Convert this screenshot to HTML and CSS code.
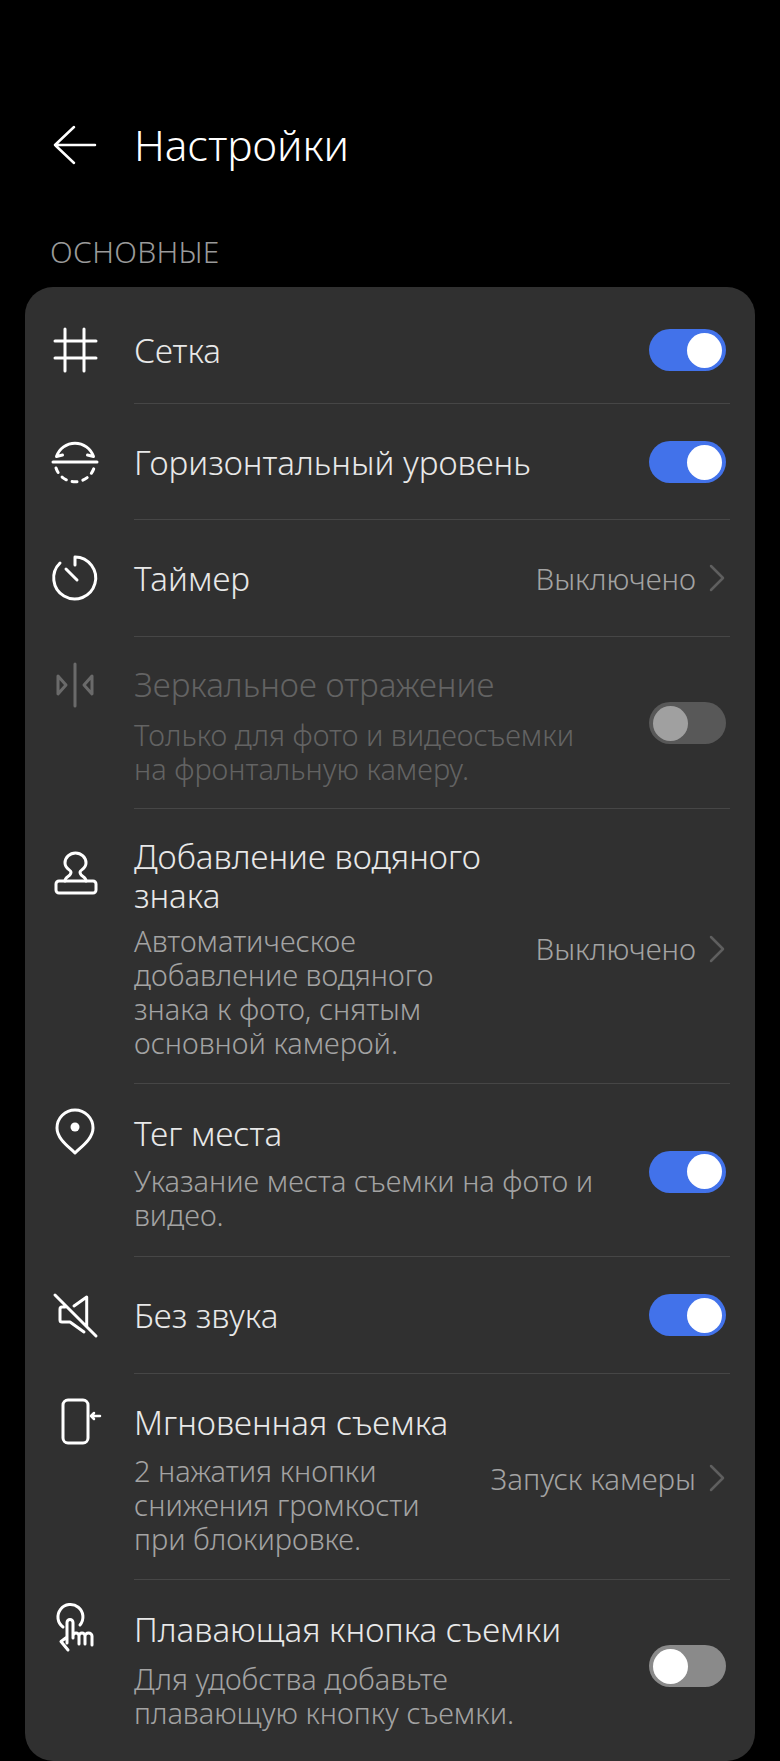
FILE: index.html
```html
<!DOCTYPE html>
<html lang="ru">
<head>
    <meta charset="UTF-8">
    <meta name="viewport" content="width=device-width, initial-scale=1.0">
    <title>Настройки</title>
    <link rel="stylesheet" href="styles.css">
</head>
<body>
    <header class="topbar">
        <svg class="back-icon" viewBox="0 0 44 44"><path d="M21 3 L2 21 L21 39 M2 21 H42"/></svg>
        <h1>Настройки</h1>
    </header>

    <h2 class="section-title">ОСНОВНЫЕ</h2>

    <div class="card">
        <div class="row row-grid">
            <svg class="icon" viewBox="0 0 44 44"><path d="M2 13 H43 M2 30 H43 M12 1 V43 M31 1 V43"/></svg>
            <div class="row-title">Сетка</div>
            <div class="toggle on"></div>
        </div>

        <div class="row row-level">
            <svg class="icon" viewBox="0 0 44 44">
                <path d="M0 22 H44"/>
                <path d="M3.5 16.5 A19.5 19.5 0 0 1 40.5 16.5 M3.5 16.5 L9.5 15 M40.5 16.5 L34.5 15"/>
                <path class="dashed" d="M3 28 A20 20 0 0 0 41 28"/>
            </svg>
            <div class="row-title">Горизонтальный уровень</div>
            <div class="toggle on"></div>
        </div>

        <div class="row row-timer">
            <svg class="icon" viewBox="0 0 44 44"><path d="M22 1 A21 21 0 1 1 7 7 M22 1 V9 M13 13 L24 24"/></svg>
            <div class="row-title">Таймер</div>
            <div class="row-value">Выключено<svg class="chevron" viewBox="0 0 16 28"><path d="M2 2 L14 14 L2 26"/></svg></div>
        </div>

        <div class="row disabled row-mirror">
            <svg class="icon" viewBox="0 -1 44 44"><path d="M22 1 V43 M5 13 L13 22 L5 31 Z M39 13 L31 22 L39 31 Z"/></svg>
            <div class="row-title">Зеркальное отражение</div>
            <div class="row-sub">Только для фото и видеосъемки<br>на фронтальную камеру.</div>
            <div class="toggle"></div>
        </div>

        <div class="row row-stamp">
            <svg class="icon" viewBox="0 2 44 44"><rect x="3" y="29" width="40" height="12" rx="3"/><path d="M12 29 C12 24 18 25 18 20 C18 18 12 17 12 11 A10.5 10 0 0 1 33 11 C33 17 27 18 27 20 C27 25 33 24 33 29"/></svg>
            <div class="row-title">Добавление водяного<br>знака</div>
            <div class="row-sub">Автоматическое<br>добавление водяного<br>знака к фото, снятым<br>основной камерой.</div>
            <div class="row-value">Выключено<svg class="chevron" viewBox="0 0 16 28"><path d="M2 2 L14 14 L2 26"/></svg></div>
        </div>

        <div class="row row-place">
            <svg class="icon" viewBox="0 2 44 44"><path d="M22 44 C16 38 4 30 4 19 A18 18 0 0 1 40 19 C40 30 28 38 22 44 Z"/><circle class="solid" cx="22" cy="18" r="4.5"/></svg>
            <div class="row-title">Тег места</div>
            <div class="row-sub">Указание места съемки на фото и<br>видео.</div>
            <div class="toggle on"></div>
        </div>

        <div class="row row-mute">
            <svg class="icon" viewBox="0 1 44 44"><path d="M2 3 L43 44 M33.7 34 V5 L21 14 M12 15 H9 Q7 15 7 17 V28 Q7 30 9 30 H17 L31 40"/></svg>
            <div class="row-title">Без звука</div>
            <div class="toggle on"></div>
        </div>

        <div class="row row-snap">
            <svg class="icon" viewBox="0 1 44 44"><rect x="10" y="1" width="25" height="43" rx="5"/><path class="thin" d="M47 17 H38 M41 14 L38 17 L41 20"/></svg>
            <div class="row-title">Мгновенная съемка</div>
            <div class="row-sub">2 нажатия кнопки<br>снижения громкости<br>при блокировке.</div>
            <div class="row-value">Запуск камеры<svg class="chevron" viewBox="0 0 16 28"><path d="M2 2 L14 14 L2 26"/></svg></div>
        </div>

        <div class="row row-last">
            <svg class="icon" viewBox="0 1 44 44"><path d="M10 21 A12.5 12.5 0 1 1 27 19 M14 31 L8 35.5 L15 44 M14 37 V16.5 A3 3 0 0 1 20 16.5 V32 M20 30 A3 3 0 0 1 26 30 V38 M26 30 A3 3 0 0 1 32 30 V38 M32 30 A3.5 3 0 0 1 39 30 V39"/></svg>
            <div class="row-title">Плавающая кнопка съемки</div>
            <div class="row-sub">Для удобства добавьте<br>плавающую кнопку съемки.</div>
            <div class="toggle"></div>
        </div>
    </div>
</body>
</html>
```

FILE: styles.css
```css
body {
    font-family: "Noto Sans", "Liberation Sans", sans-serif;
    background-color: #000;
    color: #e8e8e8;
    margin: 0;
    height: 1761px;
    overflow: hidden;
}
.topbar {
    display: flex;
    align-items: center;
    padding: 123px 0 0 53px;
}
.back-icon {
    width: 44px;
    height: 44px;
    fill: none;
    stroke: #fff;
    stroke-width: 2.5;
    stroke-linecap: round;
    stroke-linejoin: round;
}
h1 {
    color: #fff;
    font-size: 42.5px;
    font-weight: 300;
    line-height: 44px;
    margin: 0 0 2px 37px;
}
.section-title {
    color: #9a9a9a;
    font-size: 30px;
    font-weight: 300;
    letter-spacing: 0.3px;
    line-height: 34px;
    margin: 0;
    padding: 66px 0 18px 50px;
}
.card {
    background: #303030;
    margin: 0 25px;
    padding-top: 10px;
    height: 1474px;
    border-radius: 28px;
    box-sizing: border-box;
}
.row {
    display: grid;
    grid-template-columns: 44px 1fr auto;
    column-gap: 37px;
    padding: 28px 25px 24px 28px;
    position: relative;
    align-items: center;
}
.row::after {
    content: "";
    position: absolute;
    left: 109px;
    right: 25px;
    bottom: 0;
    border-bottom: 1px solid #464646;
}
.row-last::after {
    display: none;
}
.row-grid {
    padding-top: 31px;
    padding-bottom: 32px;
}
.row-level {
    padding-top: 36px;
    padding-bottom: 36px;
}
.row-timer {
    padding-top: 36px;
    padding-bottom: 37px;
}
.row-mirror {
    padding-top: 25px;
    padding-bottom: 23px;
}
.row-place {
    padding-top: 27px;
    padding-bottom: 25px;
}
.row-mute {
    padding-top: 36px;
    padding-bottom: 37px;
}
.row-snap {
    padding-top: 26px;
    padding-bottom: 24px;
}
.row-last {
    padding-top: 27px;
}
.icon {
    width: 44px;
    height: 44px;
    overflow: visible;
    grid-column: 1;
    grid-row: 1;
    fill: none;
    stroke: #fff;
    stroke-width: 3;
    stroke-linecap: round;
    stroke-linejoin: round;
}
.icon .dashed {
    stroke-dasharray: 5 6;
}
.icon .solid {
    fill: #fff;
    stroke: none;
}
.icon .thin {
    stroke-width: 2.5;
}
.row-title {
    grid-column: 2;
    grid-row: 1;
    font-size: 33.2px;
    font-weight: 300;
    line-height: 39px;
}
.row-sub {
    grid-column: 2;
    grid-row: 2;
    color: #a3a3a3;
    font-size: 29px;
    font-weight: 300;
    line-height: 34px;
    margin-top: 11px;
}
.row-mirror .row-sub {
    margin-top: 12px;
}
.row-stamp .row-sub {
    margin-top: 9px;
}
.row-place .row-sub {
    margin-top: 9px;
}
.row-snap .row-sub {
    margin-top: 10px;
}
.row-value {
    grid-column: 3;
    grid-row: 1 / 3;
    display: flex;
    align-items: center;
    gap: 13px;
    color: #a3a3a3;
    font-size: 29.5px;
    font-weight: 300;
    padding-right: 5px;
}
.chevron {
    width: 16px;
    height: 28px;
    fill: none;
    stroke: #5f5f5f;
    stroke-width: 2.5;
    stroke-linecap: round;
    stroke-linejoin: round;
}
.toggle {
    grid-column: 3;
    grid-row: 1 / 3;
    display: flex;
    align-items: center;
    width: 77px;
    height: 42px;
    margin-right: 4px;
    padding: 0 4px;
    box-sizing: border-box;
    border-radius: 21px;
    background: #8a8a8a;
}
.toggle::after {
    content: "";
    width: 35px;
    height: 35px;
    border-radius: 50%;
    background: #fff;
}
.toggle.on {
    background: #4272ea;
    justify-content: flex-end;
}
.row-mirror .toggle {
    margin-bottom: 2px;
}
.row-last .toggle {
    margin-bottom: 5px;
}
.disabled .row-title,
.disabled .row-sub {
    color: #636363;
}
.disabled .icon {
    stroke: #6a6a6a;
}
.disabled .toggle {
    background: #585858;
}
.disabled .toggle::after {
    background: #a0a0a0;
}
```
